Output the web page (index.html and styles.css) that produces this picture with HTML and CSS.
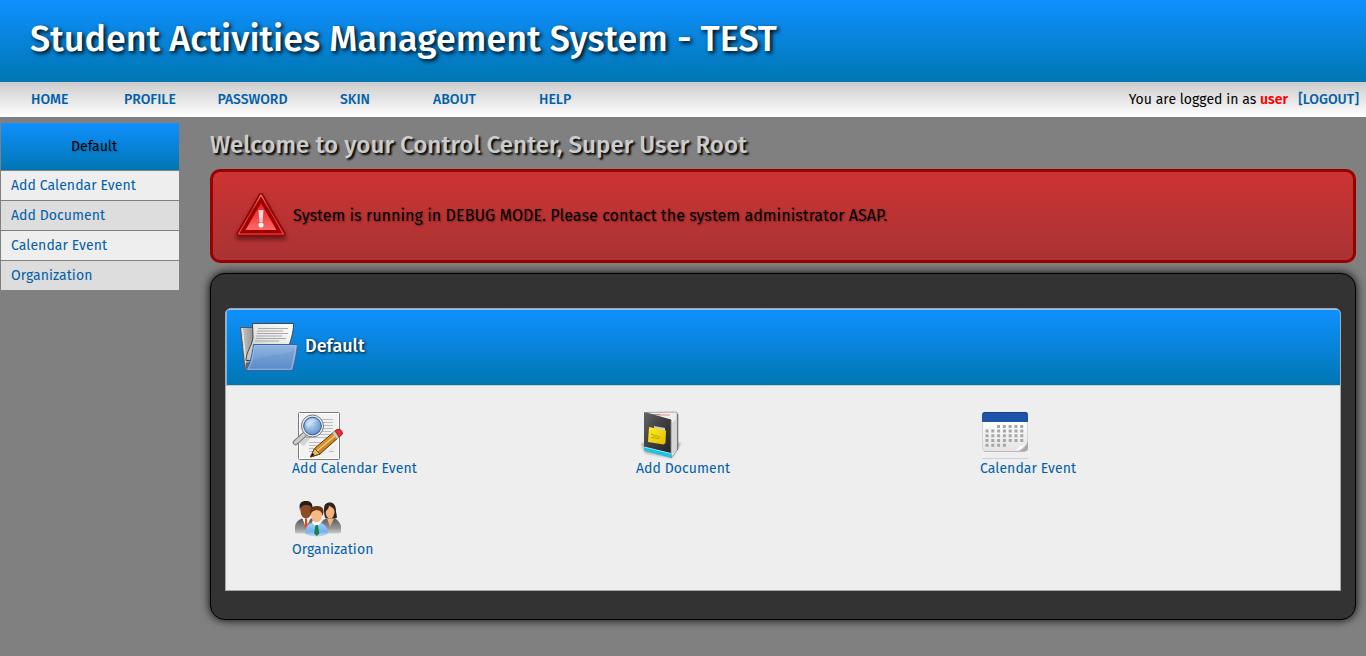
FILE: index.html
```html
<!DOCTYPE html>
<html lang="en">
<head>
<meta charset="utf-8">
<title>Student Activities Management System - TEST</title>
<link rel="stylesheet" href="styles.css">
</head>
<body>
<header class="banner"><h1>Student Activities Management System - TEST</h1></header>
<nav class="nav">
  <div class="links">
    <a class="n1">HOME</a><a class="n2">PROFILE</a><a class="n3">PASSWORD</a><a class="n4">SKIN</a><a class="n5">ABOUT</a><a>HELP</a>
  </div>
  <div class="session">You are logged in as <b>user</b><a class="logout">[LOGOUT]</a></div>
</nav>
<div class="layout">
  <aside class="sidebar">
    <div class="side-title">Default</div>
    <a>Add Calendar Event</a><a>Add Document</a><a>Calendar Event</a><a>Organization</a>
  </aside>
  <main class="main">
    <h2>Welcome to your Control Center, Super User Root</h2>
    <div class="alert">
      <svg class="warn" width="60" height="56" viewBox="-.5 -.5 60 56">
        <defs>
          <linearGradient id="wr" x1="0" y1="0" x2="0" y2="1"><stop offset="0" stop-color="#e88"/><stop offset=".4" stop-color="#b33"/><stop offset="1" stop-color="#e55"/></linearGradient>
          <linearGradient id="wi" x1="0" y1="0" x2="0" y2="1"><stop offset="0" stop-color="#e11e1e"/><stop offset="1" stop-color="#ff6969"/></linearGradient>
          <filter id="blur" x="-20%" y="-20%" width="140%" height="150%"><feGaussianBlur stdDeviation="2"/></filter>
        </defs>
        <path d="M29.500 9 53 49H6z" fill="#300" stroke="#300" stroke-width="4" stroke-linejoin="round" opacity=".55" filter="url(#blur)"/>
        <path d="M29.500 7 51.500 45H7.500z" fill="#a00" stroke="#900" stroke-width="5" stroke-linejoin="round"/>
        <path d="M29.500 6.500 52 45.500H7z" fill="#a00000" stroke="url(#wr)" stroke-width="1.200" stroke-linejoin="round"/>
        <path d="M29.500 14.500 45 41.500H14z" fill="url(#wi)"/>
        <path d="M27 21.500h5l-1 12h-3z" fill="#ffd5d5"/><circle cx="29.500" cy="36.500" r="2.500" fill="#fff"/>
      </svg>
      <span>System is running in DEBUG MODE. Please contact the system administrator ASAP.</span>
    </div>
    <section class="box">
      <div class="panel">
        <div class="panel-head">
          <svg width="60" height="52" viewBox="0 0 60 52">
            <defs>
              <linearGradient id="fg" x1="0" y1="0" x2="1" y2="0"><stop offset="0" stop-color="#e0e0e0"/><stop offset="1" stop-color="#777"/></linearGradient>
              <linearGradient id="fp" x1="0" y1="1" x2="1" y2="0"><stop offset="0" stop-color="#bbb"/><stop offset=".5" stop-color="#e6e6e6"/><stop offset="1" stop-color="#fff"/></linearGradient>
              <linearGradient id="fb" x1="0" y1="0" x2="0" y2="1"><stop offset="0" stop-color="#90b4df"/><stop offset="1" stop-color="#5e8fcb"/></linearGradient>
            </defs>
            <path d="M1.500 5.500H16l-2 42H6z" fill="url(#fg)" stroke="#555"/>
            <path d="M3 7.500h11M3.500 10h11M3.500 12.500h10M4 15h9M4 17.500h9M4.500 20h8M5 23h7M5 26h6" stroke="#aaa"/>
            <path d="M3.500 7 7.500 46" stroke="#eee"/>
            <path d="M7 40.500h9V48H6z" fill="#666"/>
            <path d="M13.500 1.500h41c0 10-3 17-5 24L44 36l-31 2.500H7c0-9 6-14 7-23z" fill="url(#fp)" stroke="#444"/>
            <path d="M19 6.500h30M18 9h26M18 11.500h31M17 14h26M17 16.500h30M16 19h24" stroke="#aaa"/>
            <path d="M14.500 22.500h44c-1 11-3 19-5 26H6c5-5 7-15 8.500-26z" fill="url(#fb)" stroke="#3465a4"/>
            <path d="M15.500 23.800H57C56 33 54 41 52.500 47.200H9c4-6 5.500-15 6.500-23.400z" fill="none" stroke="#a8c5e8" opacity=".7"/>
            <path d="M15 38c15-6 32-4 40-10l-4 19H9z" fill="#4779b8" opacity=".16"/>
          </svg>
          <span>Default</span>
        </div>
        <div class="grid">
          <a class="item">
            <svg width="52" height="50" viewBox="0 0 52 50">
              <defs><linearGradient id="pc" x1="0" y1="0" x2="1" y2="1"><stop offset="0" stop-color="#f4bd55"/><stop offset=".5" stop-color="#d28b25"/><stop offset="1" stop-color="#865006"/></linearGradient>
              <radialGradient id="ln" cx=".4" cy=".35" r=".7"><stop offset="0" stop-color="#c5dcf5"/><stop offset="1" stop-color="#5b8fce"/></radialGradient></defs>
              <rect x="6.500" y="2.500" width="41" height="47" rx="1" fill="#f2f2f2" stroke="#7c7c7c"/>
              <rect x="7.500" y="3.500" width="39" height="45" fill="none" stroke="#fff"/>
              <path d="M14 9.500h27M14 12.500h27M14 15.500h27M14 18.500h27M14 21.500h25M14 24.500h27M14 27.500h22M17 32.500h21M17 35.500h18M17 38.500h12M17 41.500h8M38 41.500h4" stroke="#bdbdbd"/>
              <path d="M7 33 18 23l2 3-8 10z" fill="#777" opacity=".25"/>
              <path d="m13 24-9.500 8.500" stroke="#777" stroke-width="5.500" stroke-linecap="round"/><path d="m13 24-9.500 8.500" stroke="#ccc" stroke-width="3.500" stroke-linecap="round"/>
              <circle cx="20.500" cy="16" r="11" fill="#eee" stroke="#777"/>
              <circle cx="20.500" cy="16" r="8.800" fill="url(#ln)" stroke="#2d5a9b"/>
              <path d="M14 15c0-4 4-6 8-6l4 2c-4 0-9 3-10 8z" fill="#fff" opacity=".35"/>
              <path d="M18 47 37 42 45 34 36 42z" fill="#666" opacity=".3"/>
              <path d="m18.500 47 4-8.500L43.500 20.500c3-2 6 0 6.800 3.500L28 44z" fill="url(#pc)" stroke="#5d3708"/>
              <path d="m25 41 20-17" stroke="#f1c97d" stroke-width="1.500"/>
              <path d="m18.500 47 4-8.500 5.500 5.500z" fill="#e9b96e" stroke="#6b430d"/>
              <path d="m18.500 47 2-4 2 2z" fill="#111"/>
              <path d="m40.500 23 4.500 6 2-2-4-6z" fill="#ccc"/>
              <path d="M43 21c3-3.500 8-1 7.500 3L47 27z" fill="#e82f37" stroke="#8e1b1b" stroke-width=".7"/>
            </svg>
            <span>Add Calendar Event</span>
          </a>
          <a class="item">
            <svg width="52" height="50" viewBox="0 0 52 50">
              <defs><linearGradient id="bk" x1="0" y1="0" x2="1" y2="1"><stop offset="0" stop-color="#666"/><stop offset=".4" stop-color="#444"/><stop offset="1" stop-color="#222"/></linearGradient>
              <linearGradient id="yl" x1="0" y1="0" x2="1" y2="1"><stop offset="0" stop-color="#fff020"/><stop offset="1" stop-color="#e2bd00"/></linearGradient>
              <filter id="b2" x="-20%" y="-20%" width="140%" height="140%"><feGaussianBlur stdDeviation="1.200"/></filter></defs>
              <path d="M5 33 9 43 36 48 45 33z" fill="#444" opacity=".4" filter="url(#b2)"/>
              <path d="M10 2.500 39 2q3 0 3 3v34l-7 9-3-36z" fill="#eee" stroke="#777" stroke-width=".6"/>
              <path d="M37 12v31M39 10v32" stroke="#aaa" stroke-width=".7"/><path d="M41.300 4v36" stroke="#444" stroke-width=".8"/>
              <path d="M15 4.500h9" stroke="#999"/><path d="M22 5h12" stroke="#e77" stroke-width=".8"/>
              <path d="M8 2 12 3 35 9.500V45L8 39z" fill="url(#bk)"/>
              <path d="M35 10v38" stroke="#777"/>
              <path d="M8 37 35 43.500V48L8 40.500z" fill="#16c5e6"/><path d="m8 37 27 6.500" stroke="#88eaff"/>
              <path d="m18 16 11 2v4H18z" fill="#ccc"/>
              <path d="M13 17 30 20.500 29.500 33l-2 1.500-15.500-2.500z" fill="url(#yl)"/>
              <path d="m15 24 3 1v2m1-1.500 3 .5m1 0v2m-8-.5 8 1" stroke="#a08e10" stroke-width=".7" fill="none"/>
            </svg>
            <span>Add Document</span>
          </a>
          <a class="item">
            <svg width="52" height="50" viewBox="0 0 52 50">
              <defs><linearGradient id="cg" x1="0" y1="0" x2="0" y2="1"><stop offset="0" stop-color="#fff"/><stop offset="1" stop-color="#e3e3e3"/></linearGradient></defs>
              <path d="M2.500 10h45v25l-8 6.500H6q-3.500 0-3.500-3z" fill="url(#cg)" stroke="#d5d5d5"/>
              <path d="M48 31v7q0 3-3 3.500H37q8-2 11-10.500z" fill="#aaa"/><path d="M47 32c-4 5-6 8-13 9 5-2 5-4 5-5 3 0 6-1 8-4z" fill="#fff"/>
              <path d="M4 41.500h41" stroke="#bbb"/>
              <path d="M2 12V5q0-3 3-3h40q3 0 3 3v7z" fill="#1c54aa"/><path d="M3 3.800Q4 2.500 5 2.500h40q2 0 2.500 1" stroke="#173f83" fill="none"/>
              <g stroke="#a6a6a6" stroke-width="3" stroke-dasharray="3 2.800"><path d="M17 16.500h27M5.500 21h38.500M5.500 25.800h38.500M5.500 30.500h38.500M5.500 35.300h20.500"/></g>
              <path d="M2 48.500h46" stroke="#d2d2d2"/>
            </svg>
            <span>Calendar Event</span>
          </a>
          <a class="item">
            <svg width="52" height="50" viewBox="0 -8.500 52 50">
              <defs><linearGradient id="bl" x1="0" y1="0" x2="0" y2="1"><stop offset="0" stop-color="#a6d1fa"/><stop offset=".7" stop-color="#74b1ef"/><stop offset="1" stop-color="#cfe2f5"/></linearGradient>
              <linearGradient id="gr" x1="0" y1="0" x2="0" y2="1"><stop offset="0" stop-color="#555"/><stop offset=".7" stop-color="#999"/><stop offset="1" stop-color="#ccc"/></linearGradient></defs>
              <path d="M3 33v-6q1-6 7-8h10q6 3 7 8v7H5q-2 0-2-1z" fill="url(#gr)"/><path d="m10 18 4 10 5-10z" fill="#fff"/><path d="m13 19 2 0 1 11h-3z" fill="#f0440c"/>
              <ellipse cx="14" cy="11" rx="5.500" ry="8" fill="#8b4d25"/><path d="M8 11C6.500 4 9 1.500 14 1.500s7.500 3 6 9c-1-4-3-5-6-5s-5 1-6 5.500z" fill="#251d1a"/>
              <path d="M33 5q6-4 9.500 2 2 6 2.500 11-4 3-12 0-2-7 0-13z" fill="#30221f"/>
              <path d="M28 34v-8q2-6 8-8h5q7 3 8 9v5q0 2-2 2z" fill="url(#gr)"/><path d="m35 19 3 8 4-8z" fill="#f7b37b"/>
              <ellipse cx="38" cy="12" rx="4.500" ry="7" fill="#f2b27d"/><path d="M33 14C31 5 34 3 38 3s7 4 5.500 11C43 9 40 8 37 6c0 4-3 4-4 8z" fill="#30221f"/>
              <path d="M13.500 34v-4q2-6 8-7h6q7 2 8 8v3q-10 5-22 0z" fill="url(#bl)" stroke="#84b2df" stroke-width=".5"/>
              <path d="m20 23 4.500 5 4.500-5-1-3h-7z" fill="#fff"/><path d="M23.500 25.500H26L27.300 34l-2.500 2.500-2.700-2.500z" fill="#16834a"/>
              <ellipse cx="24.500" cy="15.500" rx="5.500" ry="7.500" fill="#f4b987"/><path d="M18.500 16C17 9 19 6.500 25 6.500s8 4 5.500 10c-1-5-3-5.500-6-6-3 1-5 1-6 5.500z" fill="#673512"/>
            </svg>
            <span>Organization</span>
          </a>
        </div>
      </div>
    </section>
  </main>
</div>
</body>
</html>
```
FILE: styles.css
```css
* { box-sizing: border-box; }
html, body { margin: 0; height: 100%; overflow: hidden; }
body { background: #808080; font: 14px/20px "Fira Sans", "Noto Sans", sans-serif; color: #000; }
a { color: #0260a8; text-decoration: none; }
.banner { height: 82px; padding: 18px 30px; background: linear-gradient(#0f90ff, #0076b2); }
h1 { margin: 0; font-size: 36px; line-height: 43px; font-weight: 500; letter-spacing: .02px; color: #fff; text-shadow: 2px 2px 4px #000; white-space: nowrap; }
.nav { height: 35px; display: flex; justify-content: space-between; align-items: center; padding: 0 7px 0 31px; background: linear-gradient(#ccc, #fff); }
.links { display: flex; }
.links a, .logout { font-weight: 500; }
.n1 { width: 93px; }
.n2 { width: 93.500px; }
.n3 { width: 122.500px; }
.n4 { width: 93px; }
.n5 { width: 106px; }
.session { letter-spacing: .03px; }
.session b { color: #f00; font-weight: 600; }
.logout { margin-left: 10px; }
.layout { display: flex; align-items: flex-start; padding: 6px 10px 0 1px; }
.sidebar { width: 178px; margin-right: 31px; display: flex; flex-direction: column; gap: 1px; }
.side-title { height: 47px; padding-left: 8px; line-height: 47px; text-align: center; text-shadow: 1px 1px 2px rgba(0,0,0,.25); background: linear-gradient(#0f90ff, #0076b2); }
.sidebar a { height: 29px; padding-left: 10px; line-height: 29px; letter-spacing: .07px; background: #eee; }
.sidebar a:nth-of-type(even) { background: #ddd; }
.main { flex: 1; }
h2 { margin: 0; height: 46px; font-size: 24.200px; line-height: 43px; font-weight: 500; color: #ccc; text-shadow: 2px 2px 2px #000; white-space: nowrap; }
.alert { height: 94px; border: 3px solid #900; border-radius: 10px; background: linear-gradient(#c33, #a33); display: flex; align-items: center; padding-left: 18px; font-size: 16px; letter-spacing: .075px; text-shadow: 1px 1px 2px rgba(0,0,0,.4); }
.warn { margin-right: 2px; }
.box { height: 347px; margin-top: 10px; padding: 34px 14px 28px; border: 1px solid #000; border-radius: 15px; background: #333; box-shadow: 0 0 10px #000; }
.panel { height: 283px; border: 1px solid #aaa; border-radius: 6px 6px 0 0; background: #eee; overflow: hidden; }
.panel-head { height: 77px; display: flex; align-items: center; padding-left: 12px; border-top: 1px solid #8bc5f8; border-left: 1px solid #74b8ee; border-bottom: 1px solid #ccc; background: linear-gradient(#0f90ff, #0076b2); color: #fff; font-size: 18px; font-weight: 500; text-shadow: 1px 1px 3px #000; }
.panel-head span { margin: 0 0 3px 6px; }
.grid { display: grid; grid-template-columns: 344px 344px 344px; grid-template-rows: 81px 81px; padding: 24px 0 0 66px; }
.item { display: flex; flex-direction: column; }
.item span { line-height: 17px; letter-spacing: .07px; }
```
